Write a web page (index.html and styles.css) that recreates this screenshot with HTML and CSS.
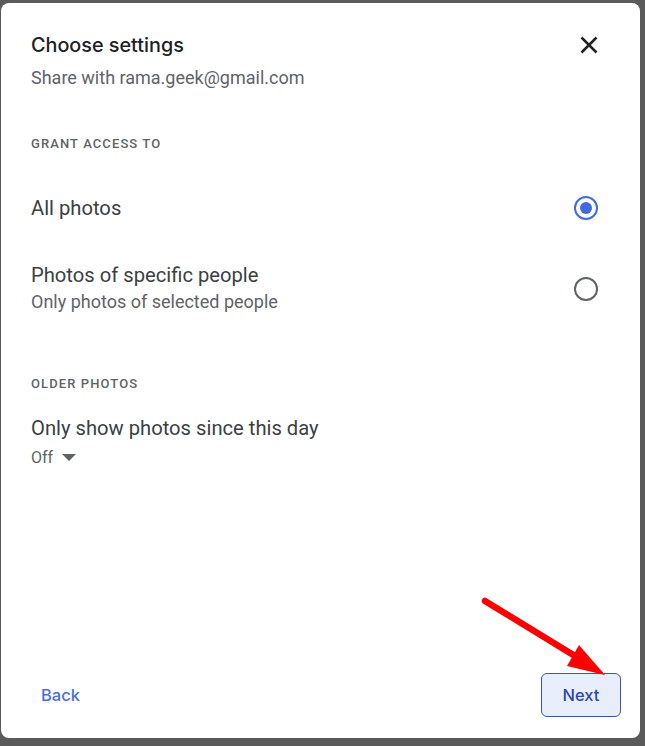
FILE: index.html
```html
<!DOCTYPE html>
<html lang="en">
<head>
<meta charset="utf-8">
<title>Choose settings</title>
<link rel="stylesheet" href="styles.css">
</head>
<body>
<div class="dialog">
  <header class="head">
    <div class="head-text">
      <h1 class="title">Choose settings</h1>
      <p class="subtitle">Share with rama.geek@gmail.com</p>
    </div>
    <button class="close" aria-label="Close">
      <svg width="18" height="18" viewBox="0 0 18 18"><path d="M1.5 1.5 L16.5 16.5 M16.5 1.5 L1.5 16.5" stroke="#202124" stroke-width="2.5" fill="none"/></svg>
    </button>
  </header>

  <section class="section grant">
    <div class="label">Grant access to</div>
    <div class="option opt-all">
      <div class="opt-text"><div class="opt-title">All photos</div></div>
      <span class="radio checked"><span class="dot"></span></span>
    </div>
    <div class="option opt-people">
      <div class="opt-text">
        <div class="opt-title">Photos of specific people</div>
        <div class="opt-sub">Only photos of selected people</div>
      </div>
      <span class="radio"></span>
    </div>
  </section>

  <section class="section older">
    <div class="label">Older photos</div>
    <div class="opt-title since">Only show photos since this day</div>
    <div class="select">Off <span class="caret"></span></div>
  </section>

  <footer class="foot">
    <button class="btn-back">Back</button>
    <button class="btn-next">Next</button>
  </footer>
</div>

<svg class="arrow" width="645" height="746" viewBox="0 0 645 746">
  <g fill="#ff0000" stroke="none">
    <line x1="485" y1="601" x2="575" y2="656" stroke="#ff0000" stroke-width="6.5" stroke-linecap="round"/>
    <polygon points="579,645 567,666 605,675"/>
  </g>
</svg>
</body>
</html>
```

FILE: styles.css
```css
html, body {
  margin: 0;
  padding: 0;
}
body {
  width: 645px;
  height: 746px;
  background: #5a5a5a;
  position: relative;
  overflow: hidden;
  font-family: Roboto, "Noto Sans", Arial, sans-serif;
}
.dialog {
  position: absolute;
  left: 1px;
  top: 3px;
  width: 639px;
  height: 735px;
  background: #fff;
  border-radius: 8px;
  box-sizing: border-box;
  display: flex;
  flex-direction: column;
}
.head {
  display: flex;
  justify-content: space-between;
  align-items: flex-start;
  padding: 28px 42px 0 30px;
}
.title {
  margin: 0;
  font-family: Inter, Roboto, sans-serif;
  font-weight: 500;
  font-size: 19.8px;
  line-height: 28px;
  color: #202124;
}
.subtitle {
  margin: 7px 0 0;
  font-size: 18px;
  line-height: 24px;
  color: #5f6368;
}
.close {
  border: 0;
  background: none;
  padding: 0;
  margin-top: 5px;
  width: 18px;
  height: 18px;
  display: block;
}
.section {
  padding: 0 42px 0 30px;
}
.label {
  font-size: 13px;
  line-height: 16px;
  font-weight: 500;
  letter-spacing: 1.1px;
  text-transform: uppercase;
  color: #5f6368;
}
.grant {
  margin-top: 46px;
}
.option {
  display: flex;
  justify-content: space-between;
  align-items: center;
}
.opt-all {
  margin-top: 44px;
}
.opt-people {
  margin-top: 43px;
}
.opt-title {
  font-size: 20.2px;
  line-height: 24px;
  color: #3c4043;
}
.opt-sub {
  margin-top: 3px;
  font-size: 18px;
  line-height: 24px;
  color: #5f6368;
}
.radio {
  width: 24px;
  height: 24px;
  box-sizing: border-box;
  border: 2px solid #5f6368;
  border-radius: 50%;
  display: flex;
  align-items: center;
  justify-content: center;
}
.radio.checked {
  border-color: #4169e1;
}
.dot {
  width: 12px;
  height: 12px;
  border-radius: 50%;
  background: #4169e1;
}
.older {
  margin-top: 62px;
}
.since {
  margin-top: 24px;
}
.select {
  margin-top: 8px;
  font-size: 16px;
  line-height: 20px;
  color: #5f6368;
  display: flex;
  align-items: center;
  gap: 9px;
}
.caret {
  width: 0;
  height: 0;
  border-left: 7.5px solid transparent;
  border-right: 7.5px solid transparent;
  border-top: 7.5px solid #5f6368;
  margin-top: -2px;
}
.foot {
  margin-top: auto;
  display: flex;
  justify-content: space-between;
  align-items: center;
  padding: 0 19px 21px 40px;
}
.btn-back, .btn-next {
  font-family: Inter, Roboto, sans-serif;
  font-weight: 500;
  font-size: 16.5px;
  background: none;
  border: 0;
  padding: 0;
}
.btn-back {
  color: #4a6ee0;
}
.btn-next {
  width: 80px;
  height: 44px;
  box-sizing: border-box;
  border: 1px solid #3f51b5;
  border-radius: 6px;
  background: #e8eefc;
  color: #3046a8;
}
.arrow {
  position: absolute;
  left: 0;
  top: 0;
  pointer-events: none;
}
```
